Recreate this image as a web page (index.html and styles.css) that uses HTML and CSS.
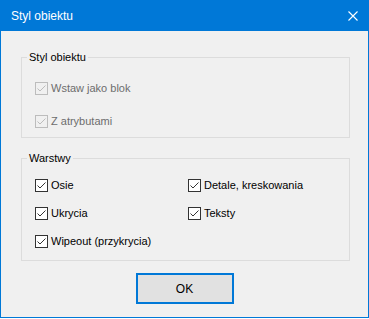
FILE: index.html
```html
<!DOCTYPE html>
<html lang="pl">
<head>
    <meta charset="UTF-8">
    <title>Styl obiektu</title>
    <link rel="stylesheet" href="styles.css">
</head>
<body>
    <div class="dialog">
        <div class="titlebar">
            <span class="title">Styl obiektu</span>
            <svg class="close" width="10" height="10" viewBox="0 0 10 10">
                <path d="M0.5 0.5 L9.5 9.5 M9.5 0.5 L0.5 9.5" stroke="#fff" stroke-width="1.1" fill="none"/>
            </svg>
        </div>

        <div class="content">
            <!-- Styl obiektu -->
            <fieldset class="group group-style">
                <legend>Styl obiektu</legend>
                <div class="rows">
                    <label class="check disabled">
                        <span class="box"><svg width="11" height="11" viewBox="0 0 11 11"><polyline points="1.5,5.5 4,8 9.5,2.5" /></svg></span>
                        Wstaw jako blok
                    </label>
                    <label class="check disabled">
                        <span class="box"><svg width="11" height="11" viewBox="0 0 11 11"><polyline points="1.5,5.5 4,8 9.5,2.5" /></svg></span>
                        Z atrybutami
                    </label>
                </div>
            </fieldset>

            <!-- Warstwy -->
            <fieldset class="group group-layers">
                <legend>Warstwy</legend>
                <div class="grid">
                    <label class="check">
                        <span class="box"><svg width="11" height="11" viewBox="0 0 11 11"><polyline points="1.5,5.5 4,8 9.5,2.5" /></svg></span>
                        Osie
                    </label>
                    <label class="check">
                        <span class="box"><svg width="11" height="11" viewBox="0 0 11 11"><polyline points="1.5,5.5 4,8 9.5,2.5" /></svg></span>
                        Detale, kreskowania
                    </label>
                    <label class="check">
                        <span class="box"><svg width="11" height="11" viewBox="0 0 11 11"><polyline points="1.5,5.5 4,8 9.5,2.5" /></svg></span>
                        Ukrycia
                    </label>
                    <label class="check">
                        <span class="box"><svg width="11" height="11" viewBox="0 0 11 11"><polyline points="1.5,5.5 4,8 9.5,2.5" /></svg></span>
                        Teksty
                    </label>
                    <label class="check">
                        <span class="box"><svg width="11" height="11" viewBox="0 0 11 11"><polyline points="1.5,5.5 4,8 9.5,2.5" /></svg></span>
                        Wipeout (przykrycia)
                    </label>
                </div>
            </fieldset>

            <div class="buttons">
                <button class="ok-btn">OK</button>
            </div>
        </div>
    </div>
</body>
</html>
```

FILE: styles.css
```css
body {
    margin: 0;
    padding: 0;
    background-color: #ffffff;
    font-family: "Liberation Sans", Arial, sans-serif;
}
.dialog {
    width: 369px;
    height: 318px;
    box-sizing: border-box;
    border: 1px solid #0078d7;
    border-top: none;
    background-color: #f0f0f0;
}
.titlebar {
    height: 31px;
    background-color: #0078d7;
    display: flex;
    align-items: center;
    padding-left: 10px;
    padding-right: 10px;
}
.title {
    color: #ffffff;
    font-size: 12px;
}
.close {
    margin-left: auto;
}
.content {
    padding: 19px 18px 0 20px;
}
.group {
    margin: 0;
    padding: 0 13px;
    border: 1px solid #dcdcdc;
    min-width: 0;
}
.group legend {
    font-size: 11px;
    line-height: 14px;
    color: #000;
    padding: 0 2px;
    margin-left: -8px;
}
.group-style {
    padding-top: 18px;
    padding-bottom: 9px;
}
.group-layers {
    margin-top: 13px;
    padding-top: 14px;
    padding-bottom: 12px;
}
.rows {
    display: flex;
    flex-direction: column;
    gap: 20px;
}
.grid {
    display: grid;
    grid-template-columns: 153px 1fr;
    row-gap: 15px;
}
.check {
    display: flex;
    align-items: center;
    height: 13px;
    font-size: 11px;
    line-height: 13px;
    color: #000;
    white-space: nowrap;
}
.box {
    width: 13px;
    height: 13px;
    box-sizing: border-box;
    border: 1px solid #333333;
    background-color: #ffffff;
    margin-right: 3px;
    display: flex;
}
.box polyline {
    fill: none;
    stroke: #333333;
    stroke-width: 1;
}
.check.disabled {
    color: #6d6d6d;
}
.check.disabled .box {
    border-color: #bcbcbc;
    background-color: #f0f0f0;
}
.check.disabled .box polyline {
    stroke: #bcbcbc;
}
.buttons {
    display: flex;
    justify-content: center;
    margin-top: 12px;
    margin-left: -2px;
}
.ok-btn {
    width: 98px;
    height: 31px;
    border: 2px solid #0078d7;
    background-color: #e1e1e1;
    font-family: "Liberation Sans", Arial, sans-serif;
    font-size: 12px;
    color: #000;
    padding: 0;
}
```
